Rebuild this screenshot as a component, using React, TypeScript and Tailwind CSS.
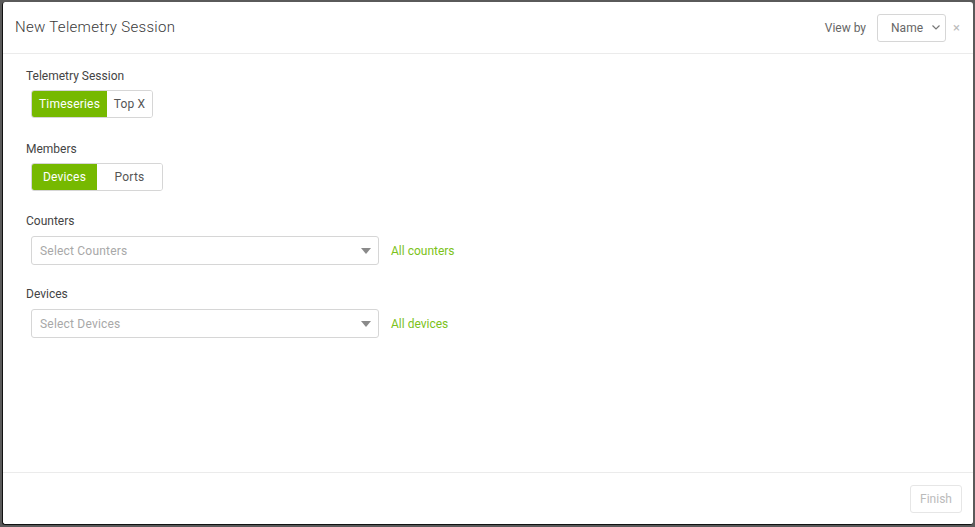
import { useState } from 'react';

type ToggleOption = { label: string; width: string };

function ToggleGroup({ options, active, onChange }: { options: ToggleOption[]; active: string; onChange: (v: string) => void }) {
  return (
    <div className="ml-[5px] flex h-[28px] w-fit overflow-hidden rounded-[3px] border border-[#d6d6d6]">
      {options.map((o) => {
        const on = o.label === active;
        return (
          <button
            key={o.label}
            onClick={() => onChange(o.label)}
            className={`${o.width} flex items-center justify-center text-[12px] tracking-[0.2px] ${
              on ? 'bg-[#76b900] text-white' : 'bg-white text-[#555]'
            }`}
          >
            {o.label}
          </button>
        );
      })}
    </div>
  );
}

function SelectField({ placeholder, link }: { placeholder: string; link: string }) {
  return (
    <div className="ml-[5px] flex items-center">
      <div className="flex h-[29px] w-[348px] items-center justify-between rounded-[3px] border border-[#d6d6d6] pl-2 pr-[8px]">
        <span className="text-[12px] tracking-[0.2px] text-[#a8a8a8]">{placeholder}</span>
        <svg width="10" height="6" viewBox="0 0 10 6" className="mr-[-1px]">
          <path d="M0 0h10L5 6z" fill="#8a8a8a" />
        </svg>
      </div>
      <a className="ml-3 mt-[1px] cursor-pointer text-[12px] text-[#7cc21a]">{link}</a>
    </div>
  );
}

export default function App() {
  const [session, setSession] = useState('Timeseries');
  const [members, setMembers] = useState('Devices');

  return (
    <div
      className="h-[527px] w-[975px] bg-[#5a5a5a] p-[2px]"
      style={{ fontFamily: 'Roboto, "Noto Sans", sans-serif' }}
    >
      <div className="flex h-full flex-col rounded-[3px] border-b border-l border-[#111] bg-white">
        {/* header */}
        <div className="flex h-[52px] shrink-0 items-center justify-between border-b border-[#ebebeb] pl-3 pr-[13px]">
          <h1 className="text-[15px] font-light tracking-[0.3px] text-[#3a3a3a]">New Telemetry Session</h1>
          <div className="flex items-center">
            <span className="text-[12px] text-[#666]">View by</span>
            <div className="ml-[11px] flex h-[28px] w-[69px] items-center justify-between rounded-[3px] border border-[#d6d6d6] pl-[13px] pr-[5px]">
              <span className="text-[12px] text-[#666]">Name</span>
              <svg width="8" height="5" viewBox="0 0 8 5">
                <path d="M0.5 0.5L4 4L7.5 0.5" stroke="#777" strokeWidth="1.2" fill="none" />
              </svg>
            </div>
            <button className="ml-[7px] text-[13px] leading-none text-[#bbb]">×</button>
          </div>
        </div>

        {/* body */}
        <div className="flex-1 pl-[23px] pt-[14px]">
          <div className="text-[12px] leading-4 text-[#444]">Telemetry Session</div>
          <div className="mt-[6px]">
            <ToggleGroup
              options={[
                { label: 'Timeseries', width: 'w-[75px]' },
                { label: 'Top X', width: 'w-[45px]' },
              ]}
              active={session}
              onChange={setSession}
            />
          </div>

          <div className="mt-[23px] text-[12px] leading-4 text-[#444]">Members</div>
          <div className="mt-[6px]">
            <ToggleGroup
              options={[
                { label: 'Devices', width: 'w-[65px]' },
                { label: 'Ports', width: 'w-[65px]' },
              ]}
              active={members}
              onChange={setMembers}
            />
          </div>

          <div className="mt-[22px] text-[12px] leading-4 text-[#444]">Counters</div>
          <div className="mt-[7px]">
            <SelectField placeholder="Select Counters" link="All counters" />
          </div>

          <div className="mt-[21px] text-[12px] leading-4 text-[#444]">Devices</div>
          <div className="mt-[7px]">
            <SelectField placeholder="Select Devices" link="All devices" />
          </div>
        </div>

        {/* footer */}
        <div className="flex h-[52px] shrink-0 items-center justify-end border-t border-[#ebebeb] pr-[11px]">
          <button className="h-[28px] w-[52px] rounded-[3px] border border-[#e6e6e6] text-[12px] text-[#bbb]">
            Finish
          </button>
        </div>
      </div>
    </div>
  );
}
